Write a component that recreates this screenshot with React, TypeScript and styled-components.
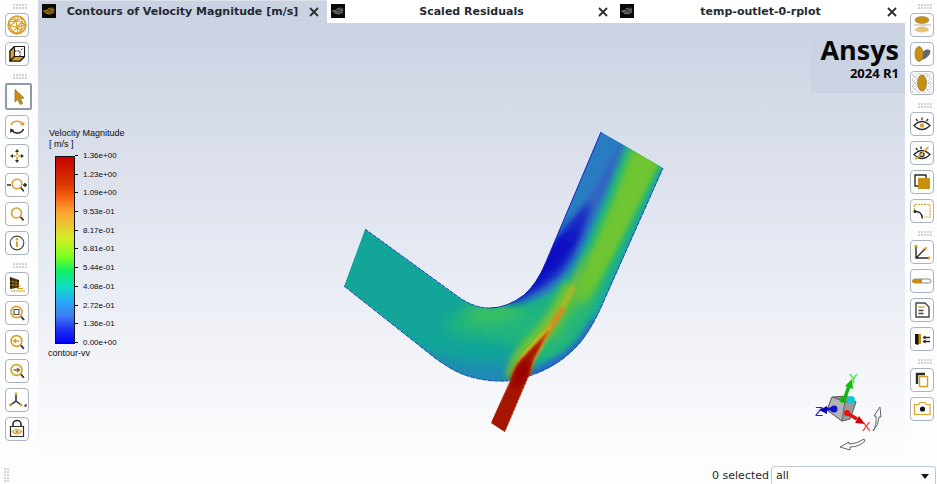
import React from "react";
import styled, { createGlobalStyle } from "styled-components";

const GOLD = "#d9a02c";
const AMBER = "#c9900f";
const INK = "#2b2b2b";

const GlobalStyle = createGlobalStyle`
  *, *::before, *::after { box-sizing: border-box; }
  html, body, #root { height: 100%; }
  body {
    margin: 0;
    background: #fdfdfd;
    color: #232a33;
    font-family: "DejaVu Sans", Verdana, sans-serif;
    font-size: 11px;
  }
`;

const Window = styled.div`
  display: flex;
  flex-direction: column;
  height: 100vh;
  overflow: hidden;
`;

const Workspace = styled.div`
  display: flex;
  flex: 1;
  min-height: 0;
`;

const Toolbar = styled.aside<{ $side: "left" | "right" }>`
  display: flex;
  flex-direction: column;
  flex: none;
  width: ${(p) => (p.$side === "left" ? "38px" : "32px")};
  padding: 4px 0 0 5px;
`;

const ToolGroup = styled.div`
  display: flex;
  flex-direction: column;
  align-items: flex-start;
  gap: 5px;
  margin-bottom: 8px;
`;

const Grip = styled.div`
  width: 15px;
  height: 5px;
  margin: 0 0 4px 8px;
  background: radial-gradient(circle at 1px 1px, #d2d2d2 1px, transparent 1px) 0 0 / 3px 3px;
`;

const ToolButton = styled.button<{ $active?: boolean }>`
  display: flex;
  align-items: center;
  justify-content: center;
  flex: none;
  width: ${(p) => (p.$active ? "27px" : "24px")};
  height: ${(p) => (p.$active ? "27px" : "24px")};
  padding: 0;
  border: ${(p) => (p.$active ? "2px solid #8c9ba8" : "1px solid #a8b5c0")};
  border-radius: ${(p) => (p.$active ? "2px" : "4px")};
  background: #fefefe;
`;

const Glyph = styled.svg`
  display: block;
  flex: none;
  width: 22px;
  height: 22px;
  overflow: visible;
`;

const Main = styled.main`
  display: flex;
  flex: 1;
  flex-direction: column;
  min-width: 0;
`;

const TabStrip = styled.div`
  display: grid;
  grid-template-columns: repeat(3, 1fr);
  flex: none;
  height: 23px;
`;

const TabItem = styled.div<{ $active?: boolean }>`
  display: flex;
  align-items: center;
  min-width: 0;
  padding: 0 8px 0 4px;
  background: ${(p) => (p.$active ? "#cbd2e2" : "#ffffff")};
  border-top: 1px solid ${(p) => (p.$active ? "#dde2ea" : "#ffffff")};
`;

const TabPicture = styled.svg`
  flex: none;
  width: 14px;
  height: 14px;
  margin-bottom: 2px;
`;

const TabLabel = styled.button`
  flex: 1;
  min-width: 0;
  padding: 0;
  border: 0;
  background: none;
  color: #232a33;
  font: bold 11px/20px "DejaVu Sans", Verdana, sans-serif;
  white-space: nowrap;
`;

const CloseButton = styled.button`
  display: flex;
  flex: none;
  padding: 0;
  border: 0;
  background: none;
`;

const CloseMark = styled.svg`
  width: 10px;
  height: 10px;
`;

const Viewport = styled.section`
  position: relative;
  display: flex;
  justify-content: space-between;
  align-items: flex-start;
  flex: 1;
  min-height: 0;
  background: linear-gradient(#cbd2e2, #e4e8f1 50%, #fdfdfe);
`;

const Model = styled.svg`
  position: absolute;
  inset: 0;
  width: 100%;
  height: 100%;
`;

const Legend = styled.div`
  position: relative;
  padding: 105px 0 0 10px;
  color: #0c0c10;
  font: 9px/11px "Liberation Sans", Arial, sans-serif;
`;

const LegendTitle = styled.div`
  padding-left: 1px;
`;

const Scale = styled.div`
  display: flex;
  height: 198px;
  padding: 0 0 0 7px;
`;

const ColorBar = styled.div`
  width: 20px;
  height: 188px;
  margin-top: 6px;
  border: 1px solid #111;
  background: linear-gradient(
    #c80000, #d83400 14%, #f55d10 21%, #ffa030 29%, #e8c832 37%, #d2ee24 44%,
    #78ff20 54%, #10f060 61%, #10dcc8 70%, #28a8f8 78%, #4080f0 85%, #2038f4 92%, #0000ff
  );
`;

const ScaleLabels = styled.ul`
  display: flex;
  flex-direction: column;
  justify-content: space-between;
  margin: 0;
  padding: 0;
  list-style: none;
  font-size: 8px;
`;

const ScaleLabel = styled.li`
  display: flex;
  align-items: center;
  gap: 5px;
  &::before {
    content: "";
    width: 3px;
    height: 1px;
    background: #111;
  }
`;

const Brand = styled.div`
  position: relative;
  display: flex;
  flex-direction: column;
  align-items: flex-end;
  width: 94px;
  height: 70px;
  padding: 11px 6px 0 0;
  background: #cbd2e2;
  color: #060606;
  font-family: "Open Sans", "Noto Sans", sans-serif;
`;

const BrandName = styled.div`
  font-size: 27px;
  line-height: 32px;
  font-weight: 700;
`;

const BrandRelease = styled.div`
  font-size: 13px;
  line-height: 14px;
  font-weight: 700;
`;

const Triad = styled.svg`
  position: absolute;
  right: 17px;
  bottom: 4px;
  width: 76px;
  height: 86px;
  overflow: visible;
`;

const StatusBar = styled.footer`
  display: flex;
  align-items: flex-end;
  flex: none;
  height: 26px;
  padding: 0 1px 0 4px;
  font-size: 11px;
`;

const SideGrip = styled.div`
  width: 5px;
  height: 15px;
  margin: 0 auto 1px 0;
  background: radial-gradient(circle at 1px 1px, #d2d2d2 1px, transparent 1px) 0 0 / 3px 3px;
`;

const SelectionLabel = styled.label`
  padding-right: 2px;
  line-height: 16px;
`;

const SelectWrap = styled.div`
  position: relative;
  width: 165px;
  height: 18px;
`;

const SelectBox = styled.select`
  appearance: none;
  display: block;
  width: 100%;
  height: 18px;
  padding: 0 24px 0 4px;
  border: 1px solid #bccad6;
  border-bottom: 0;
  border-radius: 4px 4px 0 0;
  background: #fdfdfd;
  color: #232a33;
  font: 11px/16px "DejaVu Sans", Verdana, sans-serif;
`;

const Caret = styled.svg`
  position: absolute;
  right: 7px;
  top: 8px;
  width: 8px;
  height: 5px;
  pointer-events: none;
`;

type Tool = { name: string; art: React.ReactNode; active?: boolean };

const mag = (cx: number, cy: number, r: number) => (
  <>
    <circle cx={cx} cy={cy} r={r} fill="none" stroke={GOLD} strokeWidth="1.6" />
    <path d={`M${cx + r - 1} ${cy + r - 1}l3 3.4`} stroke={INK} strokeWidth="1.7" />
  </>
);

const leftTools: Tool[][] = [
  [
    {
      name: "Mesh display",
      art: (
        <g fill="none" stroke={GOLD}>
          <circle cx="11" cy="11" r="8.8" strokeWidth="1.8" />
          <path
            strokeWidth="1.1"
            d="M5 5l5 2 6-3M10 7l-6 5-1-4 7-1 6 1 3 3M16 4v4l-5 5-7-1 3 6M10 7l1 6 1 6M11 13l-4 5M11 13l8-2-4 6-4-4M16 8l-1 9M7 18l5 1 3-2M8 3l2 4 3-5"
          />
        </g>
      ),
    },
    {
      name: "Bounding box",
      art: (
        <g stroke="#1d1710" strokeWidth="1.1" strokeLinejoin="round">
          <path d="M4 8l4.500-4.500h10v10L14 18H4z" fill="#fff" />
          <path d="M4 8l4.500-4.500v10L4 18z" fill={GOLD} />
          <path d="M4 18l4.500-4.500h10L14 18z" fill={GOLD} />
          <path d="M8.500 8H14v6M15 7l2-2" fill="none" strokeWidth="1" strokeDasharray="2 1" />
        </g>
      ),
    },
  ],
  [
    {
      name: "Select",
      active: true,
      art: <path d="M7 3.500v12.500l2.500-2.500 2.800 5 2.200-1-2-5 3.500-.5z" fill={AMBER} stroke="#8b7140" strokeWidth=".8" />,
    },
    {
      name: "Rotate view",
      art: (
        <g fill="none" strokeWidth="1.6">
          <path d="M5 9A6.500 6 0 0 1 16.500 8" stroke={GOLD} />
          <path d="M17.500 13A6.500 6 0 0 1 6 14.500" stroke={INK} />
          <path d="M18.500 5.500l-.5 4-4-.5z" fill={GOLD} stroke="none" />
          <path d="M4 17l.3-4.500 4 1.500z" fill={INK} stroke="none" />
        </g>
      ),
    },
    {
      name: "Pan view",
      art: (
        <g>
          <path d="M11 6v10M6 11h10" stroke={GOLD} strokeWidth="1.600" />
          <path d="M11 4l2 3H9zM11 18l2-3H9zM4 11l3-2v4zM18 11l-3-2v4z" fill={INK} />
          <circle cx="11" cy="11" r="1" fill="#fff" />
        </g>
      ),
    },
    {
      name: "Zoom in or out",
      art: (
        <g>
          {mag(11, 10, 4.8)}
          <path d="M1 11h4M17 11h4M19 9v4" stroke={INK} strokeWidth="1.5" />
        </g>
      ),
    },
    { name: "Zoom to area", art: mag(10.5, 10, 5) },
    {
      name: "Probe information",
      art: (
        <g>
          <circle cx="11" cy="11" r="6.8" fill="none" stroke="#4a4a4a" strokeWidth="1.2" />
          <path d="M11 9.500V15" stroke={GOLD} strokeWidth="2" fill="none" />
          <circle cx="11" cy="7.200" r="1.200" fill={GOLD} />
        </g>
      ),
    },
  ],
  [
    {
      name: "Perspective view",
      art: (
        <g>
          <path d="M4 4l9 3v7.500L4 16z" fill="#241c0c" />
          <path d="M7 5v11M10 6v9M4 8l9 2M4 12h9" stroke={AMBER} strokeWidth=".7" />
          <path d="M5 18h14M11 15.500h6M12 13h3" stroke={GOLD} strokeWidth="1.200" />
        </g>
      ),
    },
    {
      name: "Fit to window",
      art: (
        <g>
          {mag(10.5, 10, 5.6)}
          <path d="M8 7.500h5v5H8z" fill="none" stroke="#555" strokeWidth="1.200" />
        </g>
      ),
    },
    {
      name: "Previous view",
      art: (
        <g>
          {mag(10.5, 10, 5.4)}
          <path d="M7.500 10h6M10 8l-2.500 2 2.500 2" stroke={GOLD} strokeWidth="1.3" fill="none" />
        </g>
      ),
    },
    {
      name: "Next view",
      art: (
        <g>
          {mag(10.5, 10, 5.4)}
          <path d="M7.500 10h6M11 8l2.500 2-2.500 2" stroke="#87682a" strokeWidth="1.3" fill="none" />
        </g>
      ),
    },
    {
      name: "Axis orientation",
      art: (
        <g>
          <path d="M10 5v7l-5.500 4M10 12l5 4" stroke={INK} strokeWidth="1.500" fill="none" />
          <g fill={GOLD}>
            <circle cx="10" cy="5" r="1.400" />
            <circle cx="4.500" cy="16" r="1.400" />
            <circle cx="15" cy="16" r="1.400" />
          </g>
          <path d="M20.500 14.500v3h-3z" fill="#111" />
        </g>
      ),
    },
    {
      name: "Lock view",
      art: (
        <g fill="none" stroke={INK}>
          <path d="M7 8V6a4 3.500 0 0 1 8 0v2" strokeWidth="1.600" />
          <path d="M4.500 8.500h13v10h-13z" strokeWidth="1.200" />
          <path d="M6.500 13.500q4.500-5 9 0-4.500 5-9 0z" stroke={GOLD} strokeWidth="1.200" />
          <circle cx="11" cy="13.500" r="1.600" fill={AMBER} stroke="none" />
        </g>
      ),
    },
  ],
];

const rightTools: Tool[][] = [
  [
    {
      name: "Mirror planes",
      art: (
        <g>
          <ellipse cx="11" cy="6" rx="7" ry="3.400" fill={AMBER} stroke="#9c885c" strokeWidth=".7" />
          <path d="M3 11h17" stroke="#b9bec2" strokeWidth="1.200" />
          <ellipse cx="11" cy="15.500" rx="6.800" ry="3" fill="#e7c378" />
        </g>
      ),
    },
    {
      name: "Shadows",
      art: (
        <g>
          <ellipse cx="14" cy="11.500" rx="3.500" ry="6.500" transform="rotate(48 14 11.500)" fill="#666" />
          <ellipse cx="8" cy="11" rx="4" ry="7.500" fill={AMBER} stroke="#927b46" strokeWidth=".8" />
        </g>
      ),
    },
    {
      name: "Transparency",
      art: (
        <g>
          <path
            d="M1 8l7-7M1 14L14 1M1 20L20 1M8 21L21 8M14 21l7-7M1 14l7 7M1 8l13 13M1 2l19 19M8 1l13 13M14 1l7 7"
            stroke="#bdbdbd"
            strokeWidth="1"
            strokeDasharray="2 1"
          />
          <path d="M1 5l4-4M1 11L11 1M1 17L17 1M5 21L21 5M11 21l10-10M17 21l4-4" stroke="#c9c9c9" strokeWidth=".8" />
          <ellipse cx="11" cy="11" rx="4.400" ry="8" fill={AMBER} stroke="#927b46" strokeWidth=".8" />
        </g>
      ),
    },
  ],
  [
    {
      name: "Show surfaces",
      art: (
        <g fill="none" stroke={INK} strokeWidth="1.300">
          <path d="M3 12.500q8-8 16 0-8 8-16 0zM5 6l1.500 2M11 4.500v2.500M17 6l-1.500 2" />
          <circle cx="11" cy="12.500" r="2.200" fill={GOLD} stroke="none" />
        </g>
      ),
    },
    {
      name: "Hide surfaces",
      art: (
        <g fill="none" stroke={INK} strokeWidth="1.300">
          <path d="M3 12.500q8-8 16 0-8 8-16 0zM5 6l1.500 2M10 4.500v2.500" />
          <circle cx="11" cy="12.500" r="2" />
          <path d="M4.500 17.500L17.500 5" stroke={GOLD} strokeWidth="1.700" />
        </g>
      ),
    },
    {
      name: "Isolate surfaces",
      art: (
        <g>
          <path d="M4 4h11v11H4z" fill="#fff" stroke={INK} strokeWidth="1.400" />
          <path d="M7 7h12v11H7z" fill={AMBER} />
        </g>
      ),
    },
    {
      name: "Feature edges",
      art: (
        <g fill="none">
          <path d="M3.500 10V4.500h15.500V17H13" stroke={GOLD} strokeWidth="1.200" strokeDasharray="2 1" />
          <path d="M3 11.500c5-.5 8 1.500 8.500 7" stroke={INK} strokeWidth="1.500" />
          <circle cx="4" cy="11.500" r="1.500" fill={INK} />
        </g>
      ),
    },
  ],
  [
    {
      name: "Axis triad",
      art: (
        <g>
          <path d="M5 5v12h12M5 17l9-9" stroke={INK} strokeWidth="1.400" fill="none" />
          <path d="M5 3l2 3H3zM20 17l-3-2v4zM16 6l-1 4-3-3z" fill={GOLD} />
        </g>
      ),
    },
    {
      name: "Ruler",
      art: (
        <g>
          <rect x="2" y="9" width="18" height="4" rx="2" fill="#fff" stroke="#8b8b8b" />
          <path d="M3 9h8v4H3a2 2 0 0 1 0-4z" fill={AMBER} />
        </g>
      ),
    },
    {
      name: "Title box",
      art: (
        <g fill="none" stroke="#444" strokeWidth="1.400">
          <path d="M5 4h9l4 4v10H5z" />
          <path d="M7.500 8h6" stroke={GOLD} />
          <path d="M7.500 11.500h5M7.500 14.500h5" />
        </g>
      ),
    },
    {
      name: "Boundary markers",
      art: (
        <g>
          <path d="M4 6h6v10H4z" fill={AMBER} />
          <path d="M4 6h3.500v11L4 16z" fill="#151515" />
          <path d="M12 9.500h7M12 13.500h7" stroke={INK} strokeWidth="1.300" />
          <path d="M11.500 9.500l3-2v4zM11.500 13.500l3-2v4z" fill={INK} />
        </g>
      ),
    },
  ],
  [
    {
      name: "Copy picture",
      art: (
        <g fill="none">
          <path d="M14 5H6v10" stroke={INK} strokeWidth="2.400" />
          <path d="M8.500 7.500h8v10h-8z" fill="#fff" stroke={GOLD} strokeWidth="1.400" />
        </g>
      ),
    },
    {
      name: "Save picture",
      art: (
        <g>
          <path d="M3.500 6.500h4l1.500-2h5l1.500 2h3.500v10h-15.500z" fill="none" stroke={GOLD} strokeWidth="1.200" />
          <circle cx="11.500" cy="11" r="2.600" fill="#111" />
        </g>
      ),
    },
  ],
];

function ToolColumn({ side, groups }: { side: "left" | "right"; groups: Tool[][] }) {
  return (
    <Toolbar $side={side}>
      {groups.map((group, i) => (
        <React.Fragment key={i}>
          <Grip />
          <ToolGroup>
            {group.map((tool) => (
              <ToolButton key={tool.name} $active={tool.active} aria-label={tool.name} type="button">
                <Glyph viewBox="0 0 22 22">{tool.art}</Glyph>
              </ToolButton>
            ))}
          </ToolGroup>
        </React.Fragment>
      ))}
    </Toolbar>
  );
}

function Tab({ title, active }: { title: string; active?: boolean }) {
  const line = active ? "#b7811b" : "#777";
  return (
    <TabItem $active={active}>
      <TabPicture viewBox="0 0 14 14" aria-hidden="true">
        <path d="M0 0h14v14H0z" fill="#090909" />
        <path d="M1 7q4-.5 6-3 4-2 5 1 1.500 3-2 5Q5 12 1 7z" fill={line} opacity=".45" />
        <path d="M1 7q5 0 6-3M2 8q6 1 10-2M4 9.500q5 1 8-1.500M7 4q2 3 5 1" fill="none" stroke={line} strokeWidth=".8" />
      </TabPicture>
      <TabLabel role="tab" aria-selected={!!active}>{title}</TabLabel>
      <CloseButton aria-label={`Close ${title}`}>
        <CloseMark viewBox="0 0 10 10">
          <path d="M1 1l8 8M9 1L1 9" stroke="#2b2d31" strokeWidth="1.800" />
        </CloseMark>
      </CloseButton>
    </TabItem>
  );
}

const PIPE =
  "M365 229L460 298Q475 308 490 308Q507 308 524 295Q537 284 546 262L601 132L663 168L606 296Q590 335 572 351Q554 368 531 375L526 378L508 381Q483 382 462 374Q450 369 435 358L344 286Z";
const INLET = "M510 380C513 368 518 360 528 354L540 350Q533 362 529 376L505 432L491 423Z";

function VelocityModel() {
  return (
    <Model viewBox="38 23 867 435" role="img" aria-label="Velocity contours in a mixing elbow">
      <defs>
        <clipPath id="pipe"><path d={PIPE} /></clipPath>
        <clipPath id="whole"><path d={PIPE} /><path d={INLET} /></clipPath>
        <filter id="b1" x="-50%" y="-50%" width="200%" height="200%"><feGaussianBlur stdDeviation="1.200" /></filter>
        <filter id="b3" x="-50%" y="-50%" width="200%" height="200%"><feGaussianBlur stdDeviation="3" /></filter>
        <filter id="b7" x="-50%" y="-50%" width="200%" height="200%"><feGaussianBlur stdDeviation="7" /></filter>
      </defs>
      <g clipPath="url(#pipe)">
        <path d={PIPE} fill="#12a598" />
        <path d="M395 345L440 356Q472 365 512 362L520 400H430Z" fill="#1b8bb4" filter="url(#b7)" />
        <ellipse cx="490" cy="326" rx="46" ry="12" fill="#20b67c" filter="url(#b7)" />
        <ellipse cx="496" cy="314" rx="34" ry="9" fill="#3fc35a" filter="url(#b7)" />
        <path d="M480 330Q530 325 560 270L590 290L560 375L520 345Z" fill="#20b67c" filter="url(#b7)" />
        <path d="M599 125L637 145L590 235Q571 278 547 294L515 305L535 270Z" fill="#2a7cc2" filter="url(#b3)" />
        <path d="M622 140L594 190L562 236L570 256L590 222L628 150Z" fill="#3264c2" filter="url(#b3)" />
        <path d="M590 202Q582 248 562 272Q544 292 505 306L536 276L560 232Z" fill="#1526c4" filter="url(#b3)" />
        <path d="M556 242L578 230Q562 265 535 284L508 303L536 270Z" fill="#080fc4" filter="url(#b3)" />
        <path d="M560 238L570 244Q556 266 535 282L508 302L536 268Z" fill="#080fc4" filter="url(#b1)" />
        <path d="M626 142L670 168L603 320Q580 360 545 366L551 332L574 282L604 202Z" fill="#20b67c" filter="url(#b3)" />
        <path d="M633 146L660 164L595 290Q574 325 558 344L552 335L582 273L611 205Z" fill="#6ac530" filter="url(#b3)" />
        <path d="M640 150L657 161L612 252L590 288L586 273L618 204Z" fill="#70c532" filter="url(#b3)" />
        <path d="M592 320L570 350L550 358L556 332L580 296Z" fill="#20b67c" filter="url(#b7)" />
        <path d="M590 245L577 283Q558 327 535 356L525 355Q560 315 575 275Z" fill="#9abd24" filter="url(#b3)" />
        <path d="M664 170L604 302Q589 335 570 353L530 376" fill="none" stroke="#1d9bad" strokeWidth="7" filter="url(#b3)" />
        <path d="M596 321Q585 343 565 358L530 378" fill="none" stroke="#2860c8" strokeWidth="9" filter="url(#b3)" />
        <path d="M569 284Q552 321 526 345Q513 358 510 378" fill="none" stroke="#78c52c" strokeWidth="8" filter="url(#b3)" />
        <path d="M574 286Q551 330 526 354" fill="none" stroke="#a5b928" strokeWidth="5" filter="url(#b1)" />
        <path d="M563 308Q549 332 528 357" fill="none" stroke="#c99028" strokeWidth="6" filter="url(#b1)" />
      </g>
      <g clipPath="url(#whole)">
        <path d="M552 324Q537 337 524 352Q514 361 510 383L529 380Q532 363 542 347Z" fill="#c5bf24" filter="url(#b1)" />
        <path d="M550 329Q538 341 527 353Q516 363 512 380L490 422L505 434L529 376Q531 364 540 348Z" fill="#c13c0c" filter="url(#b1)" />
        <path d="M542 340Q524 356 516 368L510 381L490 423L505 434L529 376Q529 363 537 351Z" fill="#a41804" filter="url(#b1)" />
        <ellipse cx="521" cy="374" rx="7" ry="15" transform="rotate(25 521 374)" fill="#990000" filter="url(#b3)" />
      </g>
      <g fill="none" stroke="#1a45b8" strokeWidth="1">
        <path d="M365 229L460 298Q475 308 490 308" strokeDasharray="4 1" />
        <path d="M490 308Q507 308 524 295Q537 284 546 262L601 132" stroke="#1427bd" />
        <path d="M344 286L435 358Q450 369 462 374Q483 382 508 381M529 376Q554 368 572 351Q590 335 606 296L663 168" strokeDasharray="5 1" />
      </g>
      <path d="M528 378L505 432" stroke="#f5dfdb" strokeWidth="1" strokeDasharray="1 3" />
    </Model>
  );
}

function AxisTriad() {
  return (
    <Triad viewBox="812 368 76 86" role="img" aria-label="Axis triad">
      <path d="M832 397l15-1 9 6-6 17-8 2-15-11z" fill="#8c8c8c" stroke="#444" strokeWidth=".8" />
      <path d="M827 410l5-13 13 5-3 19z" fill="#b4b4b4" stroke="#555" strokeWidth=".8" />
      <path d="M845 402l11 0-6 17-8 2z" fill="#9a9a9a" stroke="#666" strokeWidth=".8" />
      <path d="M844 400l5-14" stroke="#12b412" strokeWidth="3.500" />
      <path d="M852 379l1 10-8-3z" fill="#10c010" />
      <circle cx="843" cy="400" r="3" fill="#0cbc0c" />
      <circle cx="851" cy="400" r="4" fill="#12c8d4" />
      <path d="M847 413l10 6" stroke="#e01010" strokeWidth="3.500" />
      <path d="M865 424l-10-1 4-7z" fill="#c80808" />
      <circle cx="847" cy="413" r="3" fill="#f01010" />
      <path d="M834 409h-9" stroke="#1010d0" strokeWidth="3" />
      <path d="M819 410l8-4v8z" fill="#0808a8" />
      <circle cx="834" cy="409" r="3.500" fill="#1010c8" />
      <g fontFamily="Liberation Sans, Arial, sans-serif" fontSize="13">
        <text x="849" y="383" fill="#20e820">Y</text>
        <text x="862" y="431" fill="#f02828">X</text>
        <text x="815" y="416" fill="#2020e0">Z</text>
      </g>
      <g fill="#fbfbfb" stroke="#555" strokeWidth=".9" strokeLinejoin="round">
        <path d="M873 431Q877 425 876 416L874 416L880 407L881 417L879 417Q879 425 873 431z" />
        <path d="M864 439Q857 444 849 444L849 442L840 447L850 450L850 447Q859 447 865 441z" />
      </g>
    </Triad>
  );
}

const LEVELS = [
  "1.36e+00", "1.23e+00", "1.09e+00", "9.53e-01", "8.17e-01", "6.81e-01",
  "5.44e-01", "4.08e-01", "2.72e-01", "1.36e-01", "0.00e+00",
];

export default function App() {
  return (
    <Window>
      <GlobalStyle />
      <Workspace>
        <ToolColumn side="left" groups={leftTools} />
        <Main>
          <TabStrip role="tablist">
            <Tab title="Contours of Velocity Magnitude [m/s]" active />
            <Tab title="Scaled Residuals" />
            <Tab title="temp-outlet-0-rplot" />
          </TabStrip>
          <Viewport>
            <VelocityModel />
            <Legend>
              <LegendTitle>Velocity Magnitude</LegendTitle>
              <LegendTitle>[ m/s ]</LegendTitle>
              <Scale>
                <ColorBar />
                <ScaleLabels>
                  {LEVELS.map((level) => (
                    <ScaleLabel key={level}>{level}</ScaleLabel>
                  ))}
                </ScaleLabels>
              </Scale>
              <div>contour-vv</div>
            </Legend>
            <Brand>
              <BrandName>Ansys</BrandName>
              <BrandRelease>2024 R1</BrandRelease>
            </Brand>
            <AxisTriad />
          </Viewport>
        </Main>
        <ToolColumn side="right" groups={rightTools} />
      </Workspace>
      <StatusBar>
        <SideGrip />
        <SelectionLabel htmlFor="filter">0 selected</SelectionLabel>
        <SelectWrap>
          <SelectBox id="filter" defaultValue="all">
            <option value="all">all</option>
          </SelectBox>
          <Caret viewBox="0 0 8 5" aria-hidden="true">
            <path d="M0 0h8L4 5z" fill="#15181c" />
          </Caret>
        </SelectWrap>
      </StatusBar>
    </Window>
  );
}
